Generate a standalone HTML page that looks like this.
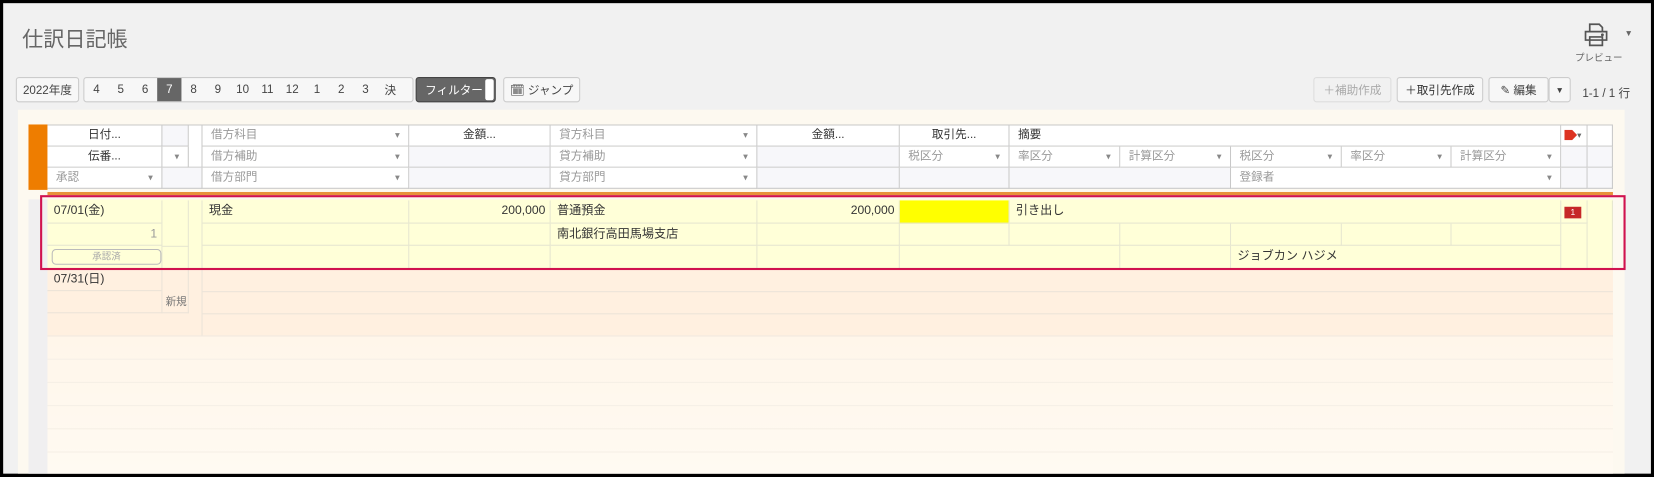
<!DOCTYPE html>
<html><head><meta charset="utf-8"><style>
*{box-sizing:border-box;margin:0;padding:0}
html,body{width:1654px;height:477px;overflow:hidden;background:#000}
#wrap{position:absolute;left:0;top:0;width:1568px;height:452px;transform:scale(1.0549);transform-origin:0 0;font-family:"Liberation Sans","Noto Sans CJK JP",sans-serif;font-size:12px;color:#333}
#pg{position:absolute;left:3px;top:3px;width:1562px;height:446px;background:#f1f1f1}
.a{position:absolute}
.btn{position:absolute;height:24px;border:1px solid #ccc;background:#f7f7f7;border-radius:3px;font-size:11px;color:#444;display:flex;align-items:center;justify-content:center}
.c{position:absolute;border-right:1px solid #c8c8c8;border-bottom:1px solid #c8c8c8;background:#fff;font-size:11px;color:#999;padding-left:8px;line-height:19px;white-space:nowrap}
.c.ct{text-align:center;padding:0;color:#333}
.c.g{background:#f7f7fa}
.ar:after{content:"▾";position:absolute;right:8px;top:0;font-size:9px;color:#888}
.d{position:absolute;border-bottom:1px solid #e6e6d0;border-right:1px solid #e6e6d0;font-size:11.5px;color:#333;line-height:21px;padding-left:6px;white-space:nowrap}
</style></head><body><div id="wrap"><div id="pg">
<div class="a" style="left:18px;top:18px;font-size:20px;color:#666">仕訳日記帳</div>
<svg class="a" style="left:1497px;top:17px" width="26" height="26" viewBox="0 0 26 26" fill="none" stroke="#555" stroke-width="1.6"><path d="M7 10V3h9l3 3v4M3 10h20v8H3zM7 15h12v8H7z"/><circle cx="19" cy="13" r=".6" fill="#555"/></svg>
<div class="a" style="left:1537px;top:24px;font-size:8px;color:#666">▼</div>
<div class="a" style="left:1490px;top:45px;font-size:9px;color:#666">プレビュー</div>
<div class="btn" style="left:12px;top:70px;width:60px">2022年度</div>
<div class="btn" style="left:76px;top:70px;width:313px;background:#f7f7f7;justify-content:flex-start">
<span style="width:23px;text-align:center">4</span><span style="width:23px;text-align:center">5</span><span style="width:23px;text-align:center">6</span><span style="width:23px;height:22px;line-height:22px;text-align:center;background:#666;color:#fff">7</span><span style="width:23px;text-align:center">8</span><span style="width:23px;text-align:center">9</span><span style="width:24px;text-align:center">10</span><span style="width:23px;text-align:center">11</span><span style="width:24px;text-align:center">12</span><span style="width:23px;text-align:center">1</span><span style="width:23px;text-align:center">2</span><span style="width:23px;text-align:center">3</span><span style="width:24px;text-align:center">決</span></div>
<div class="btn" style="left:391px;top:70px;width:76px;background:#666;color:#fff;border-color:#444;justify-content:flex-start;padding-left:8px">フィルター<span style="position:absolute;right:1px;top:1px;width:8px;height:20px;background:#fff;border-radius:2px"></span></div>
<div class="btn" style="left:474px;top:70px;width:73px">🗓 ジャンプ</div>
<div class="btn" style="left:1242px;top:70px;width:74px;color:#aaa;background:#f1f1f1;border-color:#ddd">＋補助作成</div>
<div class="btn" style="left:1321px;top:70px;width:82px;color:#333">＋取引先作成</div>
<div class="btn" style="left:1408px;top:70px;width:57px">✎ 編集</div>
<div class="btn" style="left:1465px;top:70px;width:21px;font-size:8px">▼</div>
<div class="a" style="left:1497px;top:77px;font-size:11px;color:#444">1-1 / 1 行</div>
<div class="a" style="left:14px;top:101px;width:1523px;height:345px;background:#fdf9f0"></div>
<div class="a" style="left:24px;top:115px;width:18px;height:62px;background:#ee7d00"></div>
<div class="a" style="left:42px;top:115px;width:1484px;height:1px;background:#c8c8c8"></div>
<div class="c ct" style="left:42px;top:116px;width:109px;height:20px">日付...</div>
<div class="c g" style="left:151px;top:116px;width:25px;height:20px"></div>
<div class="c" style="left:176px;top:116px;width:13px;height:40px;background:#fff"></div>
<div class="c ar" style="left:189px;top:116px;width:196px;height:20px">借方科目</div>
<div class="c ct" style="left:385px;top:116px;width:134px;height:20px">金額...</div>
<div class="c ar" style="left:519px;top:116px;width:196px;height:20px">貸方科目</div>
<div class="c ct" style="left:715px;top:116px;width:135px;height:20px">金額...</div>
<div class="c ct" style="left:850px;top:116px;width:104px;height:20px">取引先...</div>
<div class="c" style="left:954px;top:116px;width:523px;height:20px;color:#333">摘要</div>
<div class="c" style="left:1477px;top:116px;width:25px;height:20px"><span style="position:absolute;left:3px;top:4px;width:12px;height:10px;background:#d32;clip-path:polygon(0 0,60% 0,100% 50%,60% 100%,0 100%)"></span><span style="position:absolute;left:15px;top:0;font-size:8px;color:#666">▾</span></div>
<div class="c" style="left:1502px;top:116px;width:24px;height:20px"></div>
<div class="c ct" style="left:42px;top:136px;width:109px;height:20px">伝番...</div>
<div class="c ar" style="left:151px;top:136px;width:25px;height:20px"></div>
<div class="c ar" style="left:189px;top:136px;width:196px;height:20px">借方補助</div>
<div class="c g" style="left:385px;top:136px;width:134px;height:20px"></div>
<div class="c ar" style="left:519px;top:136px;width:196px;height:20px">貸方補助</div>
<div class="c g" style="left:715px;top:136px;width:135px;height:20px"></div>
<div class="c ar" style="left:850px;top:136px;width:104px;height:20px">税区分</div>
<div class="c ar" style="left:954px;top:136px;width:105px;height:20px">率区分</div>
<div class="c ar" style="left:1059px;top:136px;width:105px;height:20px">計算区分</div>
<div class="c ar" style="left:1164px;top:136px;width:105px;height:20px">税区分</div>
<div class="c ar" style="left:1269px;top:136px;width:104px;height:20px">率区分</div>
<div class="c ar" style="left:1373px;top:136px;width:104px;height:20px">計算区分</div>
<div class="c g" style="left:1477px;top:136px;width:25px;height:20px"></div>
<div class="c g" style="left:1502px;top:136px;width:24px;height:20px"></div>
<div class="c ar" style="left:42px;top:156px;width:109px;height:20px">承認</div>
<div class="c g" style="left:151px;top:156px;width:38px;height:20px"></div>
<div class="c ar" style="left:189px;top:156px;width:196px;height:20px">借方部門</div>
<div class="c g" style="left:385px;top:156px;width:134px;height:20px"></div>
<div class="c ar" style="left:519px;top:156px;width:196px;height:20px">貸方部門</div>
<div class="c g" style="left:715px;top:156px;width:135px;height:20px"></div>
<div class="c g" style="left:850px;top:156px;width:104px;height:20px"></div>
<div class="c g" style="left:954px;top:156px;width:210px;height:20px"></div>
<div class="c ar" style="left:1164px;top:156px;width:313px;height:20px">登録者</div>
<div class="c g" style="left:1477px;top:156px;width:25px;height:20px"></div>
<div class="c g" style="left:1502px;top:156px;width:24px;height:20px"></div>
<div class="a" style="left:42px;top:179px;width:1484px;height:3px;background:#e8913a"></div>
<div class="a" style="left:24px;top:186px;width:18px;height:260px;background:#f0eff0"></div>
<div class="a" style="left:42px;top:186px;width:1484px;height:66px;background:#ffffd8"></div>
<div class="a" style="left:42px;top:252px;width:1484px;height:63px;background:#fff0e0"></div>
<div class="a" style="left:42px;top:315px;width:1484px;height:131px;background:linear-gradient(#fff6ea,#fffaf2)"></div>
<div class="d" style="left:42px;top:187px;width:109px;height:22px">07/01(金)</div>
<div class="d" style="left:42px;top:209px;width:109px;height:21px;text-align:right;padding-right:4px;color:#999">1</div>
<div class="d" style="left:42px;top:230px;width:109px;height:22px"><span style="position:absolute;left:4px;top:3px;width:104px;height:15px;border:1px solid #bbb;border-radius:4px;font-size:9px;color:#aaa;line-height:13px;text-align:center">承認済</span></div>
<div class="d" style="left:151px;top:187px;width:25px;height:44px"></div>
<div class="d" style="left:176px;top:187px;width:13px;height:65px;border-bottom:none"></div>
<div class="d" style="left:189px;top:187px;width:196px;height:22px">現金</div>
<div class="d" style="left:385px;top:187px;width:134px;height:22px;text-align:right;padding-right:4px">200,000</div>
<div class="d" style="left:519px;top:187px;width:196px;height:22px">普通預金</div>
<div class="d" style="left:715px;top:187px;width:135px;height:22px;text-align:right;padding-right:4px">200,000</div>
<div class="d" style="left:850px;top:187px;width:104px;height:22px;background:#ffff00"></div>
<div class="d" style="left:954px;top:187px;width:523px;height:22px">引き出し</div>
<div class="d" style="left:1477px;top:187px;width:25px;height:22px"><span style="position:absolute;left:3px;top:6px;width:16px;height:11px;background:#c62828;color:#fff;font-size:8px;line-height:11px;text-align:center">1</span></div>
<div class="d" style="left:1502px;top:187px;width:24px;height:65px"></div>
<div class="d" style="left:189px;top:209px;width:196px;height:21px"></div>
<div class="d" style="left:385px;top:209px;width:134px;height:21px"></div>
<div class="d" style="left:519px;top:209px;width:196px;height:21px">南北銀行高田馬場支店</div>
<div class="d" style="left:715px;top:209px;width:135px;height:21px"></div>
<div class="d" style="left:850px;top:209px;width:104px;height:21px"></div>
<div class="d" style="left:954px;top:209px;width:105px;height:21px"></div>
<div class="d" style="left:1059px;top:209px;width:105px;height:21px"></div>
<div class="d" style="left:1164px;top:209px;width:105px;height:21px"></div>
<div class="d" style="left:1269px;top:209px;width:104px;height:21px"></div>
<div class="d" style="left:1373px;top:209px;width:104px;height:21px"></div>
<div class="d" style="left:1477px;top:209px;width:25px;height:43px"></div>
<div class="d" style="left:151px;top:231px;width:25px;height:21px;border-bottom:none"></div>
<div class="d" style="left:189px;top:230px;width:196px;height:22px"></div>
<div class="d" style="left:385px;top:230px;width:134px;height:22px"></div>
<div class="d" style="left:519px;top:230px;width:196px;height:22px"></div>
<div class="d" style="left:715px;top:230px;width:135px;height:22px"></div>
<div class="d" style="left:850px;top:230px;width:209px;height:22px"></div>
<div class="d" style="left:1059px;top:230px;width:105px;height:22px"></div>
<div class="d" style="left:1164px;top:230px;width:313px;height:22px">ジョブカン ハジメ</div>
<div class="d" style="left:42px;top:252px;width:109px;height:21px;border-color:#ebe3d8">07/31(日)</div>
<div class="d" style="left:42px;top:273px;width:109px;height:21px;border-color:#ebe3d8"></div>
<div class="d" style="left:151px;top:252px;width:25px;height:42px;border-color:#ebe3d8;font-size:10px;color:#777;padding:21px 0 0 3px">新規</div>
<div class="d" style="left:176px;top:252px;width:13px;height:63px;border-color:#ebe3d8;border-bottom:none"></div>
<div class="a" style="left:189px;top:273px;width:1337px;height:1px;background:#ebe3d8"></div>
<div class="a" style="left:189px;top:294px;width:1337px;height:1px;background:#ebe3d8"></div>
<div class="a" style="left:42px;top:315px;width:1484px;height:1px;background:#f0e8de"></div>
<div class="a" style="left:42px;top:337px;width:1484px;height:1px;background:#f5efe6"></div>
<div class="a" style="left:42px;top:359px;width:1484px;height:1px;background:#f5efe6"></div>
<div class="a" style="left:42px;top:381px;width:1484px;height:1px;background:#f5efe6"></div>
<div class="a" style="left:42px;top:403px;width:1484px;height:1px;background:#f5efe6"></div>
<div class="a" style="left:42px;top:425px;width:1484px;height:1px;background:#f5efe6"></div>
<div class="a" style="left:35px;top:182px;width:1503px;height:71px;border:2px solid #d0124f"></div>
</div></div></body></html>
